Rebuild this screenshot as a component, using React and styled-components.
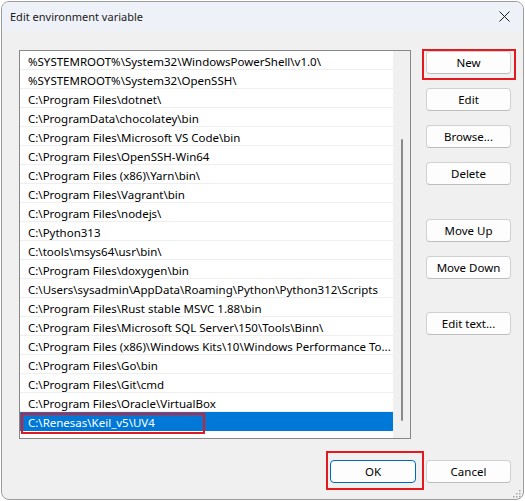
import React from "react";
import styled, { createGlobalStyle } from "styled-components";

const Global = createGlobalStyle`
  html, body { margin: 0; padding: 0; background: #ffffff; }
  body { font-family: "Noto Sans", "Open Sans", sans-serif; }
  * { box-sizing: border-box; }
`;

const Window = styled.div`
  position: relative;
  margin: 1px 0 0 1px;
  width: 523px;
  height: 499px;
  border: 1px solid #9c9c9c;
  border-radius: 8px;
  overflow: hidden;
  background: #f0f0f0;
  display: flex;
  flex-direction: column;
  font-size: 11.5px;
  color: #000;
`;

const TitleBar = styled.div`
  height: 29px;
  flex: none;
  background: #eef2f8;
  display: flex;
  align-items: center;
  justify-content: space-between;
  padding: 0 9px 0 8px;
`;

const Title = styled.span`
  font-size: 11px;
  color: #1a1a1a;
`;

const CloseBtn = styled.div`
  width: 20px;
  height: 20px;
  display: flex;
  align-items: center;
  justify-content: center;
`;

const Body = styled.div`
  flex: 1;
  display: flex;
  flex-direction: column;
  padding: 19px 11px 15px 17px;
  gap: 21px;
`;

const TopRow = styled.div`
  display: flex;
  gap: 15px;
`;

const ListBox = styled.div`
  width: 392px;
  height: 389px;
  border: 1px solid #878787;
  background: #ffffff;
  display: flex;
  flex: none;
`;

const Rows = styled.div`
  flex: 1;
  min-width: 0;
  display: flex;
  flex-direction: column;
`;

const Row = styled.div`
  position: relative;
  height: 19px;
  padding-top: 4px;
  line-height: 14px;
  padding-left: 8px;
  border-bottom: 1px solid ${(p) => (p.$selected ? "#0078d7" : "#efefef")};
  background: ${(p) => (p.$selected ? "#0078d7" : "transparent")};
  color: ${(p) => (p.$selected ? "#ffffff" : "#000000")};
  white-space: nowrap;
  overflow: hidden;
`;

const ScrollTrack = styled.div`
  width: 17px;
  flex: none;
  background: #f0f0f0;
  display: flex;
  justify-content: center;
  padding-top: 88px;
  padding-left: 1px;
`;

const Thumb = styled.div`
  width: 2px;
  height: 282px;
  background: #8a8a8a;
  border-radius: 1px;
`;

const ButtonCol = styled.div`
  display: flex;
  flex-direction: column;
  padding-top: 1px;
`;

const Button = styled.button`
  position: relative;
  width: ${(p) => p.$w || 85}px;
  height: 23px;
  margin-top: ${(p) => p.$mt || 0}px;
  background: #fdfdfd;
  border: 1px solid ${(p) => (p.$default ? "#0067c0" : "#d0d0d0")};
  border-bottom-color: ${(p) => (p.$default ? "#0067c0" : "#bdbdbd")};
  border-radius: 4px;
  font-family: "Noto Sans", "Open Sans", sans-serif;
  font-size: 11.5px;
  color: #000;
  padding: 0;
  line-height: 20px;
`;

const BottomRow = styled.div`
  display: flex;
  justify-content: flex-end;
  gap: 10px;
  padding-right: 1px;
`;

const Highlight = styled.div`
  position: absolute;
  border: 2px solid #e3191f;
  pointer-events: none;
`;

const Grip = styled.svg`
  position: absolute;
  right: 2px;
  bottom: 1px;
`;

const paths = [
  "%SYSTEMROOT%\\System32\\WindowsPowerShell\\v1.0\\",
  "%SYSTEMROOT%\\System32\\OpenSSH\\",
  "C:\\Program Files\\dotnet\\",
  "C:\\ProgramData\\chocolatey\\bin",
  "C:\\Program Files\\Microsoft VS Code\\bin",
  "C:\\Program Files\\OpenSSH-Win64",
  "C:\\Program Files (x86)\\Yarn\\bin\\",
  "C:\\Program Files\\Vagrant\\bin",
  "C:\\Program Files\\nodejs\\",
  "C:\\Python313",
  "C:\\tools\\msys64\\usr\\bin\\",
  "C:\\Program Files\\doxygen\\bin",
  "C:\\Users\\sysadmin\\AppData\\Roaming\\Python\\Python312\\Scripts",
  "C:\\Program Files\\Rust stable MSVC 1.88\\bin",
  "C:\\Program Files\\Microsoft SQL Server\\150\\Tools\\Binn\\",
  "C:\\Program Files (x86)\\Windows Kits\\10\\Windows Performance To...",
  "C:\\Program Files\\Go\\bin",
  "C:\\Program Files\\Git\\cmd",
  "C:\\Program Files\\Oracle\\VirtualBox",
  "C:\\Renesas\\Keil_v5\\UV4",
];

export default function App() {
  return (
    <>
      <Global />
      <Window>
        <TitleBar>
          <Title>Edit environment variable</Title>
          <CloseBtn>
            <svg width="11" height="11" viewBox="0 0 11 11">
              <path d="M0.5 0.5 L10.5 10.5 M10.5 0.5 L0.5 10.5" stroke="#1a1a1a" strokeWidth="1" fill="none" />
            </svg>
          </CloseBtn>
        </TitleBar>
        <Body>
          <TopRow>
            <ListBox>
              <Rows>
                {paths.map((p, i) => (
                  <Row key={i} $selected={i === paths.length - 1}>
                    {p}
                  </Row>
                ))}
              </Rows>
              <ScrollTrack>
                <Thumb />
              </ScrollTrack>
            </ListBox>
            <ButtonCol>
              <Button>New</Button>
              <Button $mt={14}>Edit</Button>
              <Button $mt={14}>Browse...</Button>
              <Button $mt={14}>Delete</Button>
              <Button $mt={34}>Move Up</Button>
              <Button $mt={14}>Move Down</Button>
              <Button $mt={33}>Edit text...</Button>
            </ButtonCol>
          </TopRow>
          <BottomRow>
            <Button $w={86} $default>OK</Button>
            <Button>Cancel</Button>
          </BottomRow>
        </Body>
        <Highlight style={{ left: 420, top: 47, width: 94, height: 31 }} />
        <Highlight style={{ left: 19, top: 411, width: 184, height: 21 }} />
        <Highlight style={{ left: 324, top: 449, width: 98, height: 39 }} />
        <Grip width="9" height="9" viewBox="0 0 9 9">
          {[
            [7, 1], [7, 4], [4, 4], [7, 7], [4, 7], [1, 7],
          ].map(([x, y], i) => (
            <rect key={i} x={x} y={y} width="1.5" height="1.5" fill="#a8a8a8" />
          ))}
        </Grip>
      </Window>
    </>
  );
}
